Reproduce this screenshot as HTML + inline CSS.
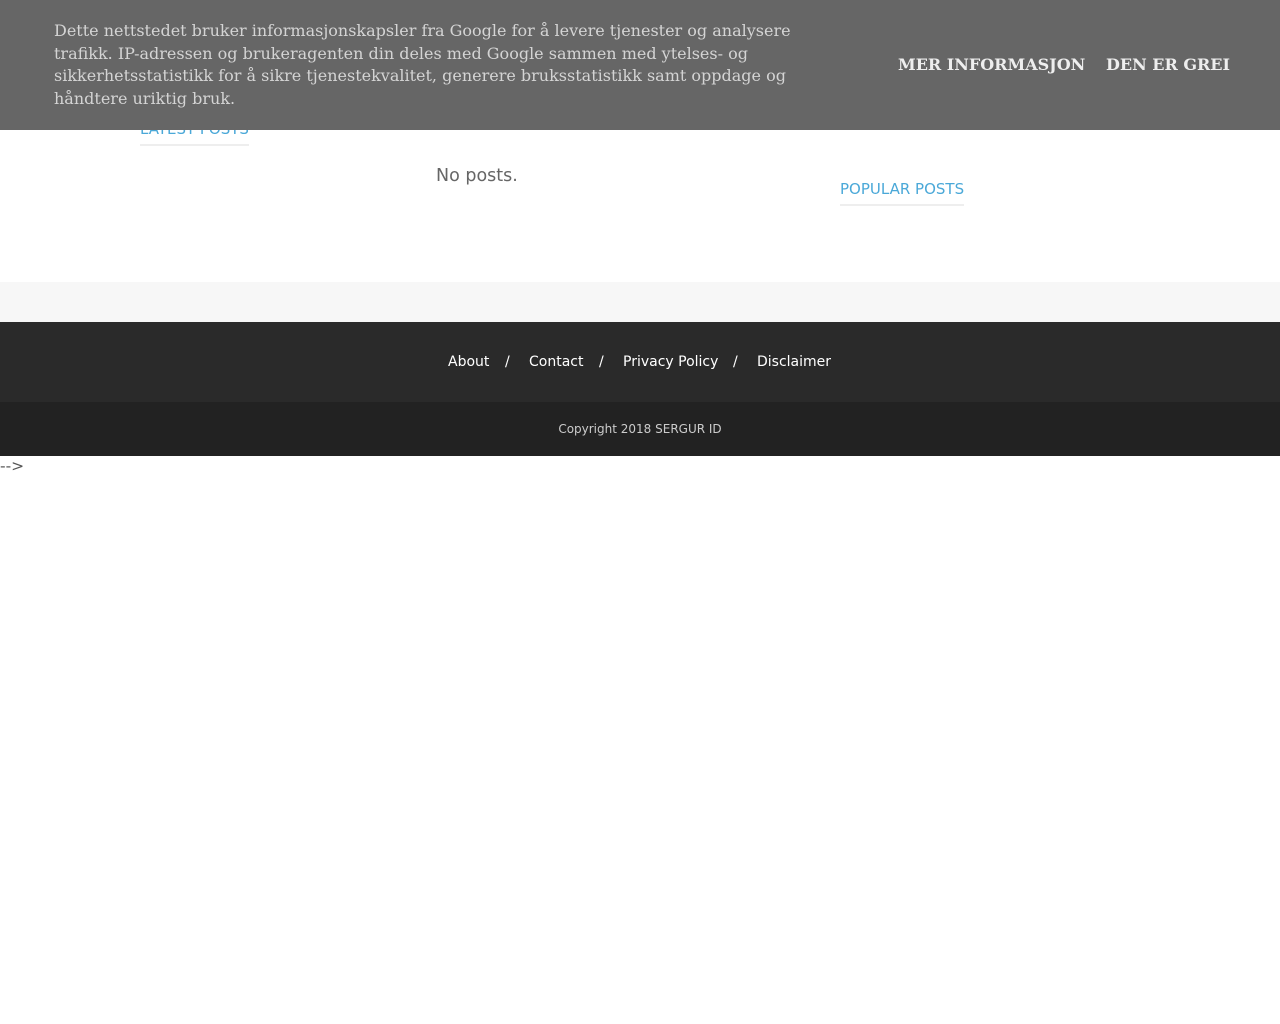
<!DOCTYPE html>
<html><head><meta charset="utf-8"><style>
body{margin:0;background:#fff;font-family:"DejaVu Sans",sans-serif;}
.cb{position:absolute;left:0;top:0;width:1280px;height:130px;background:#666;z-index:2;}
.cb p{position:absolute;left:54px;top:20px;width:760px;margin:0;font-family:"DejaVu Serif",serif;font-size:16px;line-height:22.5px;color:#d4d4d4;}
.cb .b{position:absolute;top:55px;font-family:"DejaVu Serif",serif;font-weight:bold;font-size:16px;color:#eee;}
.lp{position:absolute;left:140px;top:120px;color:#4aa8d8;font-size:15px;border-bottom:2px solid #eee;padding-bottom:6px;}
.pp{position:absolute;left:840px;top:180px;color:#4aa8d8;font-size:15px;border-bottom:2px solid #eee;padding-bottom:6px;}
.np{position:absolute;left:436px;top:166px;color:#666;font-size:17.5px;}
.g{position:absolute;left:0;top:282px;width:1280px;height:40px;background:#f7f7f7;}
.f1{position:absolute;left:0;top:322px;width:1280px;height:80px;background:#2a2a2a;color:#fff;font-size:14px;}
.f1 span{position:absolute;top:32px;}
.f2{position:absolute;left:0;top:402px;width:1280px;height:54px;background:#222;color:#ccc;font-size:12px;text-align:center;line-height:54px;}
.c{position:absolute;left:0;top:457px;font-size:15.5px;color:#555;}
</style></head><body>
<div class="cb"><p>Dette nettstedet bruker informasjonskapsler fra Google for å levere tjenester og analysere trafikk. IP-adressen og brukeragenten din deles med Google sammen med ytelses- og sikkerhetsstatistikk for å sikre tjenestekvalitet, generere bruksstatistikk samt oppdage og håndtere uriktig bruk.</p>
<span class="b" style="left:898px">MER INFORMASJON</span><span class="b" style="left:1106px">DEN ER GREI</span></div>
<div class="lp">LATEST POSTS</div>
<div class="np">No posts.</div>
<div class="pp">POPULAR POSTS</div>
<div class="g"></div>
<div class="f1"><span style="left:448px">About</span><span style="left:505px">/</span><span style="left:529px">Contact</span><span style="left:599px">/</span><span style="left:623px">Privacy Policy</span><span style="left:733px">/</span><span style="left:757px">Disclaimer</span></div>
<div class="f2">Copyright 2018 SERGUR ID</div>
<div class="c">--&gt;</div>
</body></html>
